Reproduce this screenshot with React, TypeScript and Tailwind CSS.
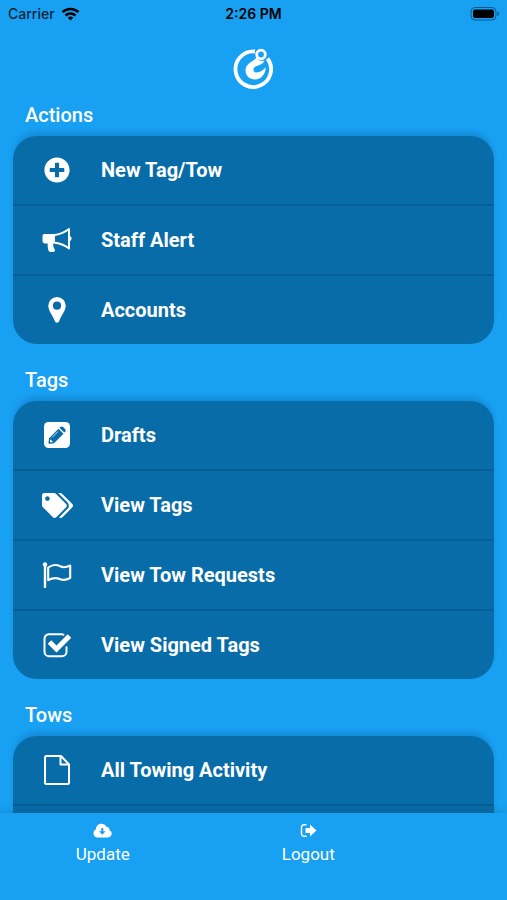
import type { ReactNode } from "react";
import { FaPlusCircle, FaTags } from "react-icons/fa";

type Item = { label: string; icon: ReactNode };

const sections: { title: string; items: Item[]; more?: boolean }[] = [
  {
    title: "Actions",
    items: [
      { label: "New Tag/Tow", icon: <FaPlusCircle size={26} /> },
      { label: "Staff Alert", icon: <MegaphoneIcon /> },
      { label: "Accounts", icon: <PinIcon /> },
    ],
  },
  {
    title: "Tags",
    items: [
      { label: "Drafts", icon: <PencilIcon /> },
      { label: "View Tags", icon: <FaTags size={31} /> },
      { label: "View Tow Requests", icon: <FlagIcon /> },
      { label: "View Signed Tags", icon: <CheckIcon /> },
    ],
  },
  {
    title: "Tows",
    items: [{ label: "All Towing Activity", icon: <PageIcon /> }],
    more: true,
  },
];

function MegaphoneIcon() {
  return (
    <svg width="30" height="26" viewBox="0 0 30 26" fill="none">
      <path d="M2.500 7H13v9.500h-1.500c-.8 2 0 4 1.300 6 .8 1.300-.3 2.500-2 2.500H8.500C6.500 25 5.500 21.500 5.700 16.500H3C1.500 16.500.5 15.500.5 14V9.500C.5 8 1 7 2.500 7z" fill="currentColor" />
      <path d="M13 8C18.500 7 23 5 27 2v19.500c-4-3.200-8.500-5-14-5.800" stroke="currentColor" strokeWidth="2" strokeLinejoin="round" />
      <path d="M27.500 9c2.800.5 2.800 4.500 0 5z" fill="currentColor" />
    </svg>
  );
}

function PinIcon() {
  return (
    <svg width="18" height="26" viewBox="0 0 18 26" fill="currentColor">
      <path fillRule="evenodd" d="M9 0a8.700 8.700 0 0 1 8.700 8.700c0 5-4.200 9-6.500 15.300-.8 2.200-3.600 2.200-4.400 0C4.500 17.700.3 13.700.3 8.700A8.700 8.700 0 0 1 9 0zm0 4.600a4.100 4.100 0 1 0 0 8.200 4.100 4.100 0 0 0 0-8.200z" />
    </svg>
  );
}

function PencilIcon() {
  return (
    <svg width="26" height="26" viewBox="0 0 26 26">
      <rect width="26" height="26" rx="4.500" fill="currentColor" />
      <g fill="#086ca8">
        <path d="M14.500 6.800l5 5-8.700 8.700c-.5.500-1 .8-1.700.9l-3.300.4c-.9.100-1.400-.4-1.300-1.300l.4-3.300c.1-.7.400-1.200.9-1.700z" />
        <path d="M15.500 5.800l.8-.8c.8-.8 2-.8 2.800 0l2 2c.8.800.8 2 0 2.800l-.8.800z" />
      </g>
      <path d="M14 9.500l-6 6" stroke="currentColor" strokeWidth=".8" />
      <path d="M6.300 17.200l2.800 2.800-2.300.4-.9-.9z" fill="currentColor" />
    </svg>
  );
}

function FlagIcon() {
  return (
    <svg width="30" height="26" viewBox="0 0 30 26" fill="none" stroke="currentColor">
      <circle cx="3" cy="2.500" r="2.200" fill="currentColor" stroke="none" />
      <path d="M3 3v22" strokeWidth="2.400" strokeLinecap="round" />
      <path d="M6.200 5.500c5-3.500 8.500-3 12-1.200 3 1.500 6 1.200 10-.8v12.500c-4 2.200-7 2.500-10 1.200-4-1.800-7.500-1.500-12 1z" strokeWidth="2.100" strokeLinejoin="round" />
    </svg>
  );
}

function CheckIcon() {
  return (
    <svg width="28" height="25" viewBox="0 0 28 25" fill="none" stroke="currentColor">
      <path d="M20.500 1.800C20 1.400 19.300 1.200 18.500 1.200H6a4.500 4.500 0 0 0-4.500 4.500v13A4.500 4.500 0 0 0 6 23.200h13a4.500 4.500 0 0 0 4.500-4.500v-4.500" strokeWidth="2" strokeLinecap="round" />
      <path d="M6.500 9l7 7L26.500 3" strokeWidth="5" />
    </svg>
  );
}

function PageIcon() {
  return (
    <svg width="26" height="30" viewBox="0 0 26 30" fill="none" stroke="currentColor" strokeWidth="2" strokeLinejoin="round">
      <path d="M1 2.500C1 1.500 1.500 1 2.500 1H17l8 8.500V27.500c0 1-.5 1.500-1.500 1.500h-21C1.500 29 1 28.500 1 27.500z" />
      <path d="M16.500 1v8.500H25" />
    </svg>
  );
}

function Logo() {
  return (
    <svg width="42" height="42" viewBox="3 3 42 42" fill="none">
      <path d="M25 6.500A17.800 17.800 0 1 0 37.500 13.500" stroke="white" strokeWidth="3.800" />
      <circle cx="31" cy="9.500" r="4.300" stroke="white" strokeWidth="2.800" />
      <path d="M26.500 12.500c1.500 3 4.500 4 8 3-1 2.500-3.500 4.300-6.500 5-3 .8-4.800 2.700-4.500 4.700.3 2.300 3 2.800 5.800 1.800 2.300-.8 4-2 6.500-4.700-.3 7.200-4.800 12.200-10.800 12.200-5.500 0-9.500-4-9.500-9C15.500 17.500 23.500 17 26.500 12.500z" fill="white" />
    </svg>
  );
}

function StatusBar() {
  return (
    <header className="grid h-7 grid-cols-3 items-center px-2 font-['Inter','Liberation_Sans',sans-serif] text-sm text-black">
      <div className="flex items-center gap-1.5">
        <span className="font-medium text-black/80">Carrier</span>
        <svg width="19" height="14" viewBox="0 0 18 14" fill="none" stroke="black" strokeWidth="2.500">
          <path d="M1 5.200a11.500 11.500 0 0 1 16 0M4 8.500a7.200 7.200 0 0 1 10 0" />
          <path d="M9 13.500L6.200 10.800a4 4 0 0 1 5.600 0z" fill="black" stroke="none" />
        </svg>
      </div>
      <span className="text-center font-semibold">2:26 PM</span>
      <svg className="justify-self-end" width="29" height="14" viewBox="0 0 29 14">
        <rect x="1" y="0.500" width="25" height="12.500" rx="4" fill="none" stroke="black" strokeOpacity=".45" />
        <rect x="3" y="2.500" width="21" height="8.500" rx="2" fill="black" />
        <path d="M27.500 4.500c2 .8 2 3.700 0 4.500z" fill="black" fillOpacity=".45" />
      </svg>
    </header>
  );
}

export default function App() {
  return (
    <div className="flex h-screen flex-col overflow-hidden bg-[#18a0f2] font-[Roboto,sans-serif] text-white">
      <StatusBar />

      <main className="min-h-0 flex-1 overflow-hidden px-[13px] pt-5">
        <div className="mb-[3px] flex justify-center">
          <Logo />
        </div>

        {sections.map((section) => (
          <section key={section.title} className="mb-3.5">
            <h2 className="h-[43px] px-3 pt-2 text-xl leading-7 font-medium">{section.title}</h2>
            <ul className="overflow-hidden rounded-3xl bg-[#086ca8] shadow-[0_-5px_5px_-1px_rgba(0,60,110,0.2)]">
              {section.items.map((item) => (
                <li key={item.label} className="border-b-2 border-[#055f96] last:border-b-0">
                  <button className="flex h-17 w-full items-center text-left text-xl font-bold">
                    <span className="flex w-22 justify-center">{item.icon}</span>
                    {item.label}
                  </button>
                </li>
              ))}
              {section.more && <li className="h-17" />}
            </ul>
          </section>
        ))}
      </main>

      <nav className="z-10 grid h-[87px] grid-cols-2 items-start bg-[#18a0f2] pt-2.5 pr-24 text-[17px] leading-6 shadow-[0_-3px_6px_rgba(0,60,60,0.12)]">
        <button className="flex flex-col items-center gap-1">
          <svg width="19" height="15" viewBox="0 0 19 15">
            <path d="M4.500 14.500A4.300 4.300 0 0 1 3 6.300C3 3 5.500 .8 8.500 .8c2.200 0 4 1.200 4.800 3a3 3 0 0 1 3.200 3.500 3.800 3.800 0 0 1-1 7.200z" fill="white" />
            <path d="M8.300 5h2v3.300h2.200L9.300 11.700 6.100 8.300h2.200z" fill="#18a0f2" />
          </svg>
          Update
        </button>
        <button className="flex flex-col items-center gap-1">
          <svg width="17" height="15" viewBox="0 0 17 15">
            <path d="M6.500 1.800H4a2.500 2.500 0 0 0-2.500 2.500v6.400A2.500 2.500 0 0 0 4 13.200h2.500" fill="none" stroke="white" strokeWidth="1.500" />
            <path d="M5.500 5H10V1.500l6.500 6-6.500 6V10H5.500z" fill="white" />
          </svg>
          Logout
        </button>
      </nav>
    </div>
  );
}
